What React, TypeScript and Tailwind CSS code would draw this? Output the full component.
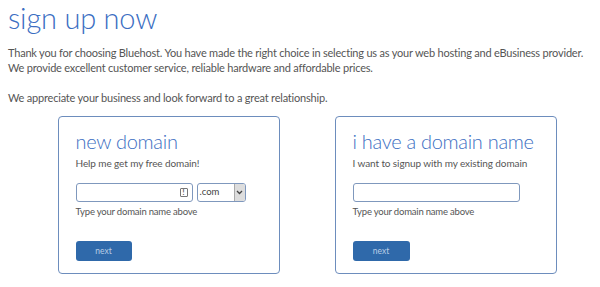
export default function App() {
  return (
    <div className="w-[600px] h-[287px] bg-white overflow-hidden font-['Lato',sans-serif] text-[#555]">
      <div className="pl-2">
        {/* Header */}
        <h1 className="text-[29px] leading-[35px] font-light text-[#3b6ec2] tracking-[-0.2px]">sign up now</h1>
        <div className="mt-[10px] text-[11px] leading-[15px] tracking-[-0.2px]">
          <p>
            Thank you for choosing Bluehost. You have made the right choice in selecting us as your web hosting and eBusiness provider.
          </p>
          <p>We provide excellent customer service, reliable hardware and affordable prices.</p>
          <p className="mt-[15px]">We appreciate your business and look forward to a great relationship.</p>
        </div>
      </div>

      {/* Options */}
      <div className="flex gap-[55px] pl-[58px] mt-[11px]">
        <div className="w-[222px] h-[158px] border-[1.5px] border-[#6d8dbd] rounded-[4px] pl-[16.5px] pt-[12px]">
          <h2 className="text-[20px] leading-[24px] font-light text-[#3b6ec2] tracking-[-0.3px]">new domain</h2>
          <p className="text-[10px] leading-[14px] mt-[3px] tracking-[-0.1px]">Help me get my free domain!</p>
          <div className="flex gap-[4px] mt-[13px]">
            <div className="w-[117px] h-[19px] border-[1.5px] border-[#7f98bd] rounded-[3px] flex items-center justify-end pr-[4px]">
              <span className="w-[8px] h-[9px] border border-[#777] rounded-[1px] text-[7px] leading-[7px] text-center font-bold text-[#555]">!</span>
            </div>
            <div className="w-[49px] h-[19px] border-[1.5px] border-[#7f98bd] rounded-[3px] flex items-stretch overflow-hidden">
              <span className="flex-1 text-[9.5px] leading-[16px] pl-[2px] text-[#444]">.com</span>
              <span className="w-[11px] bg-[#ddd] border-l border-[#aaa] flex items-center justify-center">
                <svg width="7" height="5" viewBox="0 0 7 5"><path d="M1 1l2.5 2.5L6 1" fill="none" stroke="#444" strokeWidth="1.3" /></svg>
              </span>
            </div>
          </div>
          <p className="text-[9.5px] leading-[13px] mt-[2.5px] tracking-[-0.2px]">Type your domain name above</p>
          <button className="mt-[23.5px] w-[56px] h-[20px] rounded-[3px] bg-[#2f69aa] text-[8.5px] text-[#b9cde6] flex items-center justify-center">next</button>
        </div>

        <div className="w-[222px] h-[158px] border-[1.5px] border-[#6d8dbd] rounded-[4px] pl-[16.5px] pt-[12px]">
          <h2 className="text-[20px] leading-[24px] font-light text-[#3b6ec2] tracking-[-0.3px]">i have a domain name</h2>
          <p className="text-[10px] leading-[14px] mt-[3px] tracking-[-0.1px]">I want to signup with my existing domain</p>
          <div className="flex mt-[13px]">
            <div className="w-[167px] h-[19px] border-[1.5px] border-[#7f98bd] rounded-[3px]" />
          </div>
          <p className="text-[9.5px] leading-[13px] mt-[2.5px] tracking-[-0.2px]">Type your domain name above</p>
          <button className="mt-[23.5px] w-[57px] h-[20px] rounded-[3px] bg-[#2f69aa] text-[8.5px] text-[#b9cde6] flex items-center justify-center">next</button>
        </div>
      </div>
    </div>
  );
}
